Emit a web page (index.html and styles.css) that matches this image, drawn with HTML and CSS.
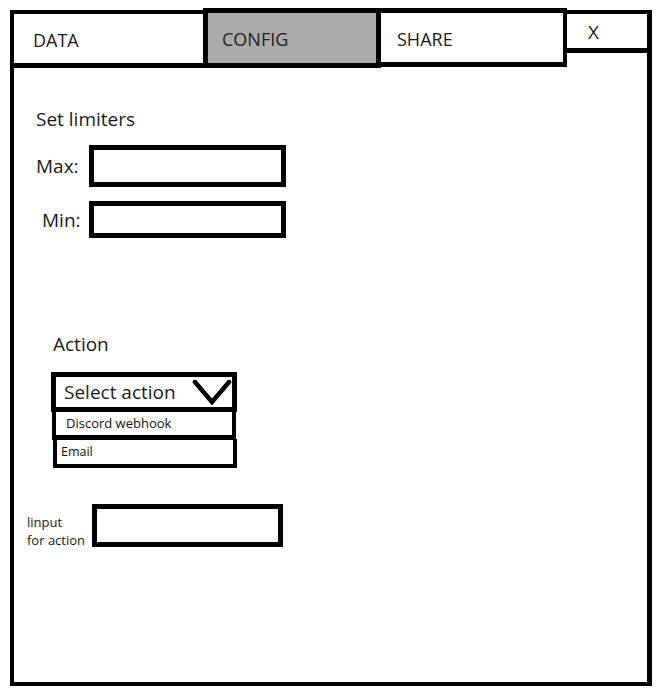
FILE: index.html
```html
<!DOCTYPE html>
<html>
<head>
<meta charset="utf-8">
<link rel="stylesheet" href="styles.css">
</head>
<body>
<div class="window">
  <div class="tabs">
    <div class="tab tab-data">DATA</div>
    <div class="tab tab-config">CONFIG</div>
    <div class="tab tab-share">SHARE</div>
    <div class="tab tab-close">X</div>
  </div>
  <div class="content">
    <div class="title">Set limiters</div>
    <div class="field field-max">
      <span class="label">Max:</span>
      <div class="box box-max"></div>
    </div>
    <div class="field field-min">
      <span class="label label-min">Min:</span>
      <div class="box box-min"></div>
    </div>
    <div class="action-title">Action</div>
    <div class="select">
      <span class="select-text">Select action</span>
      <svg class="chevron" width="40" height="26" viewBox="0 0 40 26">
        <path d="M3 2 L20 22 L37 2" fill="none" stroke="#000" stroke-width="4.5" stroke-linecap="round" stroke-linejoin="miter"/>
      </svg>
    </div>
    <div class="option option-discord">Discord webhook</div>
    <div class="option option-email">Email</div>
    <div class="input-row">
      <span class="input-label">linput<br>for action</span>
      <div class="box box-action"></div>
    </div>
  </div>
</div>
</body>
</html>
```
FILE: styles.css
```css
html, body {
  margin: 0;
  padding: 0;
  background: #fff;
}
body {
  font-family: "Open Sans", "Noto Sans", sans-serif;
  color: #1a1a1a;
}
.window {
  margin: 10px 0 0 10px;
  width: 642px;
  height: 676px;
  box-sizing: border-box;
  border-left: 4px solid #000;
  border-right: 5px solid #000;
  border-bottom: 4px solid #000;
  display: flex;
  flex-direction: column;
}
.tabs {
  display: flex;
  align-items: flex-start;
  height: 58px;
  flex: none;
}
.tab {
  box-sizing: border-box;
  display: flex;
  align-items: center;
  font-size: 18px;
}
.tab-data {
  width: 189px;
  height: 58px;
  border-top: 4px solid #000;
  border-bottom: 5px solid #000;
  padding-left: 19px;
  padding-top: 2px;
}
.tab-config {
  width: 178px;
  height: 60px;
  margin-top: -2px;
  border: 5px solid #000;
  background: #ababab;
  padding-left: 14px;
  padding-top: 2px;
  color: #222;
}
.tab-share {
  width: 186px;
  height: 59px;
  margin-top: -2px;
  border-top: 5px solid #000;
  border-right: 4px solid #000;
  border-bottom: 5px solid #000;
  padding-left: 16px;
  padding-top: 2px;
}
.tab-close {
  flex: 1;
  height: 43px;
  border-top: 4px solid #000;
  border-bottom: 5px solid #000;
  padding-left: 21px;
  font-size: 19px;
  align-items: flex-start;
  padding-top: 5px;
}
.content {
  flex: 1;
  display: flex;
  flex-direction: column;
  align-items: flex-start;
}
.title {
  font-size: 19px;
  line-height: 26px;
  margin: 38px 0 0 22px;
}
.field {
  display: flex;
  align-items: center;
  margin-left: 22px;
}
.field-max {
  margin-top: 13px;
}
.field-min {
  margin-top: 14px;
}
.label {
  width: 53px;
  font-size: 19px;
  line-height: 26px;
}
.label-min {
  box-sizing: border-box;
  padding-left: 6px;
}
.box {
  box-sizing: border-box;
  border: 5px solid #000;
  background: #fff;
}
.box-max {
  width: 197px;
  height: 42px;
}
.box-min {
  width: 197px;
  height: 37px;
}
.action-title {
  font-size: 19px;
  line-height: 26px;
  margin: 93px 0 0 39px;
}
.select {
  box-sizing: border-box;
  width: 186px;
  height: 40px;
  margin: 15px 0 0 37px;
  border: 5px solid #000;
  display: flex;
  align-items: center;
  justify-content: space-between;
  padding-left: 8px;
  padding-right: 0;
}
.select-text {
  font-size: 19px;
}
.chevron {
  display: block;
  margin-top: 1px;
}
.option {
  box-sizing: border-box;
  display: flex;
  align-items: center;
  color: #111;
}
.option-discord {
  width: 184px;
  height: 30px;
  margin: -2px 0 0 38px;
  border-left: 4px solid #000;
  border-right: 4px solid #000;
  border-bottom: 5px solid #000;
  padding-left: 10px;
  font-size: 13px;
}
.option-email {
  width: 184px;
  height: 29px;
  margin: -1px 0 0 39px;
  border: 4px solid #000;
  border-top-width: 0;
  border-bottom-width: 4px;
  padding-left: 4px;
  font-size: 12.5px;
}
.input-row {
  display: flex;
  align-items: flex-end;
  margin: 36px 0 0 13px;
  gap: 4px;
}
.input-label {
  font-size: 13px;
  line-height: 18px;
  width: 61px;
  margin-bottom: -2px;
  white-space: nowrap;
}
.box-action {
  width: 191px;
  height: 43px;
}
```
